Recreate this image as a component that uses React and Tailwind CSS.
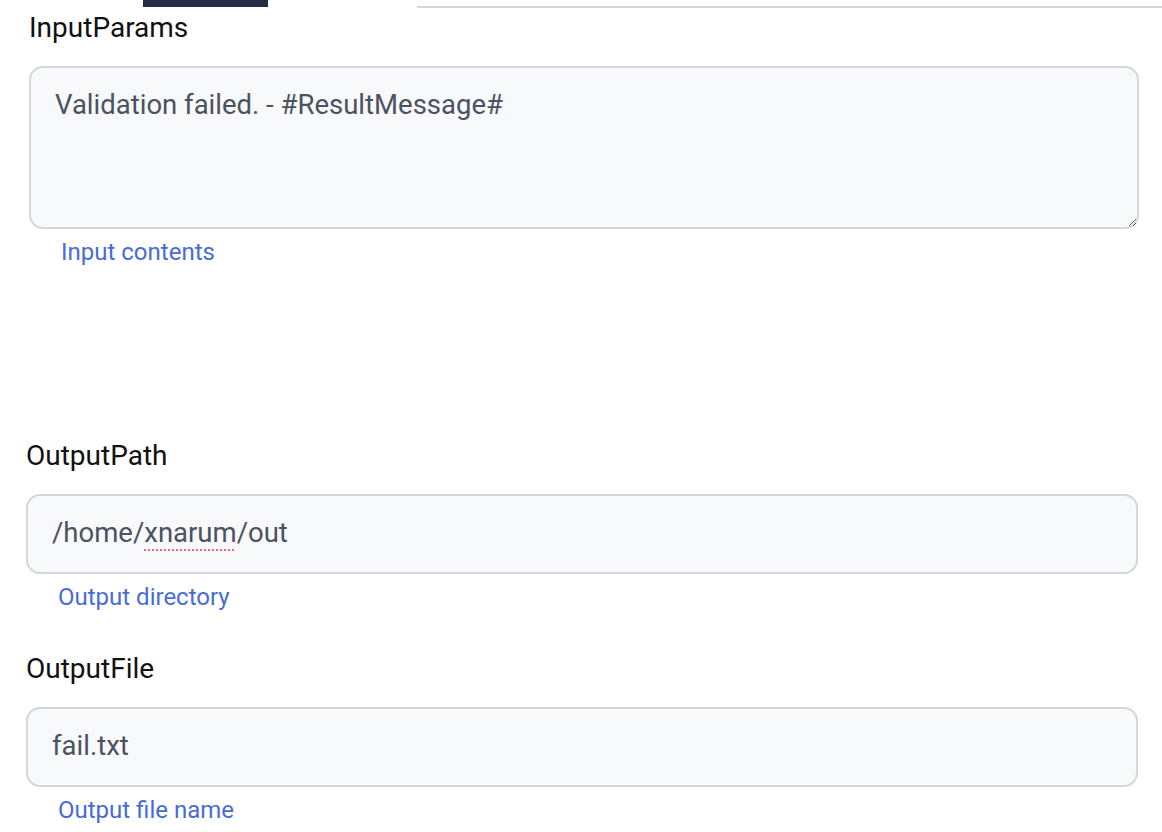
import React from "react";

const font = { fontFamily: "Roboto, 'Noto Sans', sans-serif" };

// one form field: label, boxed value, help line
const Field = ({ label, help, children, className }) => {
  return (
    <div className={className}>
      <div className="text-[28px] leading-[34px] text-[#111111] mb-[21px]">{label}</div>
      {children}
      <div className="mt-[9px] pl-[32px] text-[24px] leading-[28px] text-[#4a6cd2]">{help}</div>
    </div>
  );
};

const ValueBox = ({ children }) => {
  return (
    <div className="h-[80px] flex items-center rounded-[14px] border-2 border-[#d4d6db] bg-[#f8f9fb] px-[24px] pb-[2px] text-[27.5px] text-[#4b5261]">
      {children}
    </div>
  );
};

export default function App() {
  return (
    <div className="w-[1162px] h-[832px] bg-white overflow-hidden" style={font}>
      {/* tab strip */}
      <div className="flex h-[8px]">
        <div className="ml-[143px] w-[125px] h-[7px] bg-[#272c42]" />
        <div className="ml-auto w-[745px] h-[8px] border-b-2 border-[#d4d6db]" />
      </div>

      <Field label="InputParams" help="Input contents" className="pl-[29px] pr-[23px] pt-[3px]">
        <textarea
          className="block w-full h-[163px] rounded-[14px] border-2 border-[#d4d6db] bg-[#f8f9fb] px-[24px] pt-[20px] text-[27.5px] leading-[34px] text-[#4b5261] outline-none"
          defaultValue="Validation failed. - #ResultMessage#"
          spellCheck={false}
        />
      </Field>

      <Field label="OutputPath" help="Output directory" className="pl-[26px] pr-[24px] mt-[173px]">
        <ValueBox>
          /home/
          <span className="underline decoration-dotted decoration-[#e37070] decoration-2 underline-offset-[7px]">xnarum</span>
          /out
        </ValueBox>
      </Field>

      <Field label="OutputFile" help="Output file name" className="pl-[26px] pr-[24px] mt-[41px]">
        <ValueBox>fail.txt</ValueBox>
      </Field>
    </div>
  );
}
